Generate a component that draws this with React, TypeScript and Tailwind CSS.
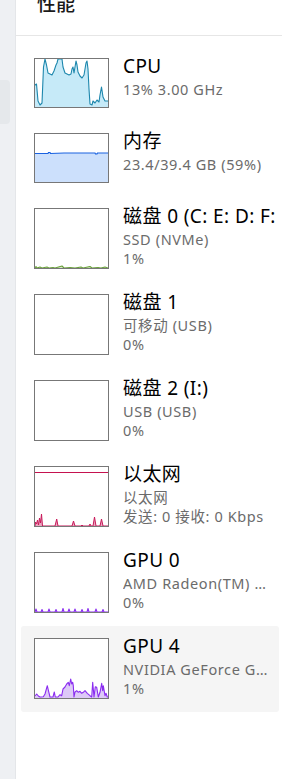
const font = { fontFamily: '"Noto Sans", "Noto Sans CJK SC", sans-serif' };

type Item = {
  title: string;
  lines: string[];
  tall: boolean;
  selected?: boolean;
  graph: React.ReactNode;
};

function pts(list: number[][]) {
  return list.map((p) => p.join(",")).join(" ");
}

const cpu = [
  [0, 26], [1.5, 25], [3, 42], [5, 46], [7, 44], [8.5, 8], [10, 0], [11.5, 6], [13, 14], [15, 15],
  [17, 16], [19, 12], [21, 6], [22, 4], [23, 0], [27, 0], [28, 8], [30, 14], [32, 15], [34, 16],
  [36, 15], [37, 10], [38, 8], [39, 14], [41, 2], [42, 6], [43, 13], [45, 17], [47, 19], [49, 16],
  [51, 4], [52, 2], [53, 10], [54, 30], [55, 45], [57, 46], [58, 42], [60, 44], [62, 41], [64, 43],
  [65, 36], [66.5, 28], [68, 38], [70, 42], [73, 42],
];

const gpu4 = [
  [0, 57], [1.7, 55], [3.3, 57], [5, 58], [8.3, 57.7], [10, 55], [12.3, 46.7], [13.3, 51], [15, 58],
  [18, 58], [19.3, 53], [20.3, 58], [23, 58], [25, 55.7], [26.7, 56.7], [28, 50], [30, 48], [31.7, 45],
  [33.3, 43.3], [34.3, 46.7], [35.7, 40], [36.7, 45], [37.7, 43.3], [38.3, 46.7], [39, 58], [40, 53],
  [41.7, 51.7], [43.3, 53.3], [45, 52.3], [46.7, 54.3], [48.3, 53.3], [50, 51.7], [52.3, 54.3],
  [55, 56.7], [56.7, 58], [57.7, 43.3], [59, 58], [60.3, 47.7], [61.7, 48.3], [63.3, 58], [65, 53.3],
  [66.7, 44.3], [67.7, 51.7], [68.3, 46.7], [70, 56.7], [71, 54.3], [72.3, 58], [73, 58],
];

const eth = [
  [0, 59], [0.5, 55], [1.5, 57], [2.5, 53], [3.5, 58], [4.5, 51], [5.5, 56], [6.5, 47], [7.5, 59],
  [20, 59], [21.7, 52], [23, 59], [37, 59], [38.5, 54], [40, 59], [46, 59], [47, 58], [48, 59],
  [54, 59], [55, 57], [56, 59], [58, 59], [59.5, 50], [61, 59], [65, 59], [66.5, 52], [68, 59], [73, 59],
];

const gpu0 = [
  [0, 59], [1, 56], [2, 59], [6, 59], [7, 56.5], [8, 59], [13, 59], [14, 56], [15, 59], [20, 59],
  [21, 56.5], [22, 59], [27, 59], [28, 55.5], [29, 59], [33, 59], [34, 56], [35, 59], [39, 59],
  [40, 56], [41, 59], [46, 59], [47, 56.5], [48, 59], [52, 59], [53, 55.5], [54, 59], [60, 59],
  [61, 56], [62, 59], [67, 59], [68, 56.5], [69, 59], [73, 59],
];

const disk0 = [
  [0, 59], [1, 57.5], [2, 59], [5, 58], [7, 59], [12, 58], [14, 59], [18, 58.5], [20, 59], [27, 57],
  [29, 59], [35, 58.5], [40, 59], [46, 58], [48, 59], [55, 57.5], [57, 59], [63, 58.5], [66, 59],
  [70, 58], [73, 59],
];

function Area({ data, h, fill, stroke }: { data: number[][]; h: number; fill: string; stroke: string }) {
  const line = pts(data);
  return (
    <svg width="73" height={h} viewBox={`0 0 73 ${h}`} className="block">
      <polygon points={`0,${h} ${line} 73,${h}`} fill={fill} />
      <polyline points={line} fill="none" stroke={stroke} strokeWidth="1.1" strokeLinejoin="round" />
    </svg>
  );
}

const items: Item[] = [
  {
    title: "CPU",
    lines: ["13% 3.00 GHz"],
    tall: false,
    graph: <Area data={cpu} h={48} fill="#c6eaf8" stroke="#1d87ad" />,
  },
  {
    title: "内存",
    lines: ["23.4/39.4 GB (59%)"],
    tall: false,
    graph: (
      <svg width="73" height="48" viewBox="0 0 73 48" className="block">
        <rect x="0" y="19" width="73" height="29" fill="#cce0fc" />
        <polyline
          points="0,19.5 13,19.5 13.5,18.5 15,18.5 15.5,19.5 29,19 55,19 60,19 60.5,20 62,20 62.5,19 73,19"
          fill="none"
          stroke="#1a62e0"
          strokeWidth="1.2"
        />
      </svg>
    ),
  },
  {
    title: "磁盘 0 (C: E: D: F:",
    lines: ["SSD (NVMe)", "1%"],
    tall: true,
    graph: <Area data={disk0} h={59} fill="#d6e8c8" stroke="#6aa03c" />,
  },
  { title: "磁盘 1", lines: ["可移动 (USB)", "0%"], tall: true, graph: null },
  { title: "磁盘 2 (I:)", lines: ["USB (USB)", "0%"], tall: true, graph: null },
  {
    title: "以太网",
    lines: ["以太网", "发送: 0 接收: 0 Kbps"],
    tall: true,
    graph: (
      <svg width="73" height="59" viewBox="0 0 73 59" className="block">
        <line x1="0" y1="5.5" x2="73" y2="5.5" stroke="#c5124f" strokeWidth="1.2" />
        <polygon points={`0,59 ${pts(eth)} 73,59`} fill="#eaa6bf" />
        <polyline points={pts(eth)} fill="none" stroke="#c8195a" strokeWidth="1" />
      </svg>
    ),
  },
  {
    title: "GPU 0",
    lines: ["AMD Radeon(TM) Graphics", "0%"],
    tall: true,
    graph: <Area data={gpu0} h={59} fill="#dcc8f8" stroke="#8a2cf0" />,
  },
  {
    title: "GPU 4",
    lines: ["NVIDIA GeForce GTX 1650", "1%"],
    tall: true,
    selected: true,
    graph: <Area data={gpu4} h={59} fill="#ddc9f7" stroke="#8a2cf0" />,
  },
];

function Card({ item }: { item: Item }) {
  return (
    <div
      className={`flex pl-[13px] pr-[9px] pt-[12px] pb-[13px] rounded-[3px] ${
        item.selected ? "bg-[#f5f5f5]" : ""
      }`}
    >
      <div
        className={`shrink-0 w-[75px] border border-[#777777] bg-white overflow-hidden ${
          item.tall ? "h-[61px]" : "h-[50px]"
        }`}
      >
        {item.graph}
      </div>
      <div className="ml-[14px] mt-[-4px] min-w-0 flex-1">
        <div className="text-[19px] leading-[24px] tracking-[0.4px] text-black whitespace-nowrap">
          {item.title}
        </div>
        <div className="mt-[2px] text-[14.5px] leading-[19px] tracking-[0.6px] text-[#6b6b6b]">
          {item.lines.map((l) => (
            <div key={l} className="truncate">
              {l}
            </div>
          ))}
        </div>
      </div>
    </div>
  );
}

export default function App() {
  return (
    <div className="flex w-[282px] h-[779px] overflow-hidden bg-white" style={font}>
      <div className="w-[16px] shrink-0 bg-[#eef0f3] border-r border-[#e4e6e9]">
        <div className="mt-[80px] h-[44px] w-[10px] rounded-r-[4px] bg-[#e5e8eb]" />
      </div>
      <div className="flex-1 min-w-0">
        <div className="h-[36px] border-b border-[#e6e6e6] pl-[21px] overflow-hidden">
          <div className="mt-[-8px] text-[19px] leading-[24px] font-medium text-[#1a1a1a]">性能</div>
        </div>
        <div className="pt-[10px] pl-[5px] pr-[3px]">
          {items.map((it) => (
            <Card key={it.title} item={it} />
          ))}
        </div>
      </div>
    </div>
  );
}
